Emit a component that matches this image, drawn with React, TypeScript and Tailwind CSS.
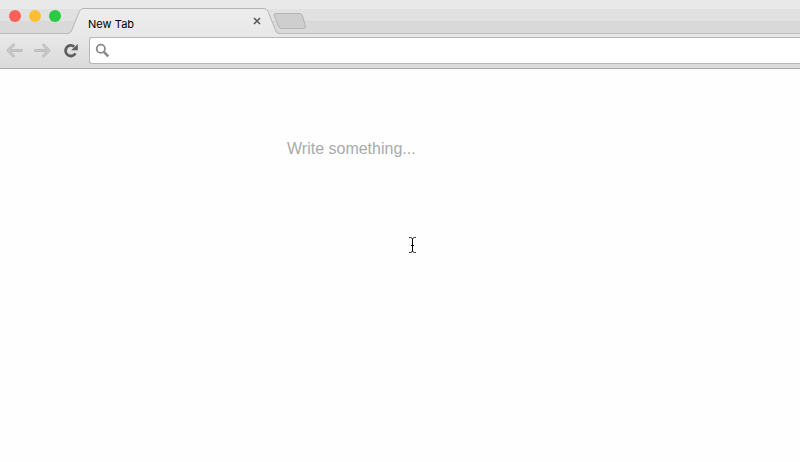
const LIGHTS = ['bg-[#fe5f57]', 'bg-[#febe2f]', 'bg-[#28cb41]'];

function TabStrip() {
  return (
    <header className="flex h-[34px] items-start bg-[linear-gradient(to_bottom,#e9e9e9_0px,#e9e9e9_9px,#e1e1e1_9px,#e1e1e1_21px,#d9d9d9_21px,#d9d9d9_33px,#bcbcbc_33px)]">
      <div className="flex w-[67px] shrink-0 gap-2 pl-[9px] pt-[10px]">
        {LIGHTS.map((color) => (
          <span key={color} className={`size-3 shrink-0 rounded-full ${color}`} />
        ))}
      </div>
      <div className="relative flex h-[34px] w-[213px] shrink-0 items-center">
        <svg className="absolute inset-0" width="213" height="34" viewBox="0 0 213 34" fill="none">
          <defs>
            <linearGradient id="tab" x1="0" y1="8" x2="0" y2="34" gradientUnits="userSpaceOnUse">
              <stop stopColor="#ededed" />
              <stop offset="1" stopColor="#e8e8e8" />
            </linearGradient>
          </defs>
          <path
            d="M0 33.5C3 33.5 4 32 5 29.5L12 12.5C13 10 14.5 8.5 17 8.5H196C199 8.5 200.5 10 201.5 12.5L208 29C209 32 210 33.5 213 33.5V34H0Z"
            fill="url(#tab)"
          />
          <path
            d="M0 33.5C3 33.5 4 32 5 29.5L12 12.5C13 10 14.5 8.5 17 8.5H196C199 8.5 200.5 10 201.5 12.5L208 29C209 32 210 33.5 213 33.5"
            stroke="#b4b4b4"
          />
        </svg>
        <span className="relative ml-[21px] mt-[14px] flex-1 font-[Inter,sans-serif] text-[11px] leading-4 tracking-[0.05px] text-black">
          New Tab
        </span>
        <svg className="relative mr-[19px] mt-[8px]" width="8" height="8" viewBox="0 0 8 8" fill="none">
          <path d="M1 1L7 7M7 1L1 7" stroke="#555" strokeWidth="1.5" />
        </svg>
      </div>
      <svg className="-ml-[7px] mt-[12px] shrink-0" width="34" height="18" viewBox="0 0 34 18" fill="none">
        <path
          d="M3 1.5H26C28 1.5 28.8 2.3 29.5 4L32.1 13C32.7 15.5 32.3 16.5 30 16.5H9C7 16.5 6.2 15.5 5.5 14L1.4 4C.8 2.3 1.2 1.5 3 1.5Z"
          fill="#cecece"
          stroke="#b3b3b3"
        />
      </svg>
    </header>
  );
}

function Toolbar() {
  return (
    <div className="flex h-[35px] items-start border-b border-[#a9a9a9] bg-linear-to-b from-[#e9e9e9] to-[#dadada]">
      <svg className="ml-[6px] mt-[9px] shrink-0" width="17" height="15" viewBox="0 0 17 15" fill="none">
        <path d="M7.5 2L2 7.5L7.5 13M2.5 7.5H15.5" stroke="#bababa" strokeWidth="2.8" strokeLinecap="round" strokeLinejoin="round" />
        <path d="M7.5 2L2 7.5L7.5 13M2.5 7.5H15.5" stroke="#cacaca" strokeWidth="1.2" strokeLinecap="round" strokeLinejoin="round" />
      </svg>
      <svg className="ml-[11px] mt-[9px] shrink-0" width="17" height="15" viewBox="0 0 17 15" fill="none">
        <path d="M9.5 2L15 7.5L9.5 13M14.5 7.5H1.5" stroke="#bababa" strokeWidth="2.8" strokeLinecap="round" strokeLinejoin="round" />
        <path d="M9.5 2L15 7.5L9.5 13M14.5 7.5H1.5" stroke="#cacaca" strokeWidth="1.2" strokeLinecap="round" strokeLinejoin="round" />
      </svg>
      <svg className="ml-[12px] mt-[9px] shrink-0" width="16" height="16" viewBox="0 0 16 16" fill="none">
        <path d="M12.4 10.4A5.3 5.3 0 1 1 11.2 3.6" stroke="#5e5e5e" strokeWidth="2.8" />
        <path d="M14.8 1V7.2H8.2Z" fill="#5e5e5e" />
      </svg>
      <div className="ml-[10px] mt-[3px] flex h-[27px] flex-1 items-center rounded-l-[3px] border border-r-0 border-[#b7b7b7] bg-white pl-[5px]">
        <svg width="15" height="15" viewBox="0 0 15 15" fill="none">
          <circle cx="5.8" cy="5.8" r="4.1" stroke="#8a8a8a" strokeWidth="1.8" />
          <path d="M8.8 8.8L13.3 13.3" stroke="#8a8a8a" strokeWidth="2.6" />
        </svg>
      </div>
    </div>
  );
}

function TextCursor() {
  return (
    <svg className="absolute left-[408px] top-[168px]" width="9" height="17" viewBox="0 0 9 17" fill="none">
      <path d="M1 .5H2.5Q4.5 .5 4.5 2.5Q4.5 .5 6.5 .5H8M1 15.5H2.5Q4.5 15.5 4.5 13.5Q4.5 15.5 6.5 15.5H8" stroke="#333" />
      <path d="M4.5 2V14M3 8.5H6" stroke="#000" />
    </svg>
  );
}

export default function App() {
  return (
    <div className="flex h-[462px] w-[800px] flex-col overflow-hidden bg-[#fefefe]">
      <TabStrip />
      <Toolbar />
      <main className="relative flex-1 pl-[287px] pt-[68px]">
        <p className="font-['Liberation_Sans',Arial,sans-serif] text-[16px] leading-6 text-[#aaa]">Write something...</p>
        <TextCursor />
      </main>
    </div>
  );
}
